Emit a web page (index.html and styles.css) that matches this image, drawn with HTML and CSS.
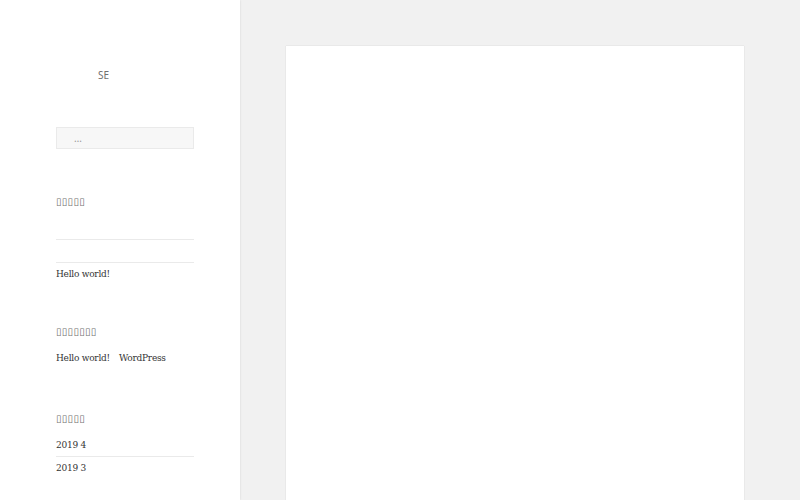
FILE: index.html
```html
<!DOCTYPE html>
<html lang="ja">
<head>
<meta charset="utf-8">
<title>SE</title>
<link rel="stylesheet" href="styles.css">
</head>
<body>
<aside class="sidebar">
  <header class="site-header">
    <p class="site-title">SE</p>
  </header>
  <div class="search">
    <span class="search-placeholder">…</span>
  </div>
  <section class="widget widget-posts">
    <h2 class="widget-title">▯▯▯▯▯</h2>
    <ul class="widget-list">
      <li class="item"> </li>
      <li class="item"> </li>
      <li class="item">Hello world!</li>
    </ul>
  </section>
  <section class="widget widget-comments">
    <h2 class="widget-title">▯▯▯▯▯▯▯</h2>
    <ul class="widget-list">
      <li class="item first">Hello world!<span class="gap">WordPress</span></li>
    </ul>
  </section>
  <section class="widget widget-archive">
    <h2 class="widget-title">▯▯▯▯▯</h2>
    <ul class="widget-list">
      <li class="item first">2019 4</li>
      <li class="item">2019 3</li>
    </ul>
  </section>
</aside>
<main class="main">
  <article class="card"></article>
</main>
</body>
</html>
```
FILE: styles.css
```css
html, body {
  margin: 0;
  padding: 0;
  height: 100%;
}
body {
  display: flex;
  background: #f1f1f1;
  overflow: hidden;
  font-family: "DejaVu Serif", serif;
  color: #333333;
}
.sidebar {
  width: 240px;
  flex: none;
  background: #ffffff;
  box-shadow: 0 0 2px rgba(0, 0, 0, 0.12);
  padding: 68px 46px 0 56px;
  box-sizing: border-box;
  position: relative;
  z-index: 1;
}
.site-header {
  text-align: center;
  padding-right: 43px;
}
.site-title {
  margin: 0;
  font-family: "Noto Sans", sans-serif;
  font-size: 10px;
  line-height: 14px;
  color: #707070;
}
.search {
  margin-top: 45px;
  height: 22px;
  background: #f7f7f7;
  border: 1px solid #eaeaea;
  box-sizing: border-box;
  padding-left: 17px;
  font-family: "Noto Sans", sans-serif;
  font-size: 10px;
  line-height: 20px;
  color: #999999;
}
.widget {
  margin-top: 40px;
}
.widget-posts {
  margin-top: 46px;
}
.widget-comments {
  margin-top: 40px;
}
.widget-comments .widget-list {
  margin-top: 1px;
}
.widget-archive {
  margin-top: 43px;
}
.widget-title {
  margin: 0 0 8px;
  font-family: "DejaVu Sans", sans-serif;
  font-weight: normal;
  font-size: 10px;
  line-height: 14px;
  letter-spacing: 0.3px;
  color: #707070;
}
.widget-list {
  list-style: none;
  margin: 0;
  padding: 0;
}
.item {
  font-size: 9px;
  letter-spacing: -0.25px;
  line-height: 22px;
  height: 22px;
  border-top: 1px solid #eaeaea;
  white-space: pre;
}
.item:first-child {
  border-top: 0;
}
.gap {
  margin-left: 9px;
}
.main {
  flex: 1;
  padding: 46px 56px 0 46px;
}
.card {
  background: #ffffff;
  height: 600px;
  box-shadow: 0 0 1px rgba(0, 0, 0, 0.2);
}
```
